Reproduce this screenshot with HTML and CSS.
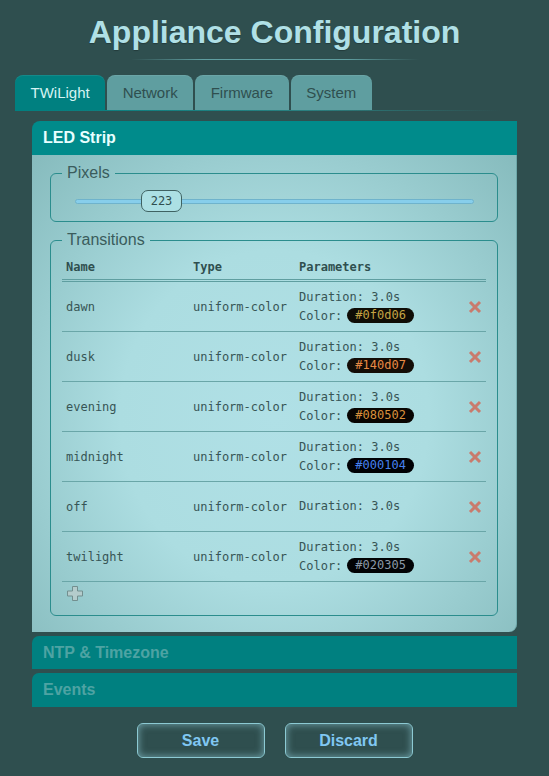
FILE: index.html
```html
<!DOCTYPE html>
<html lang="en">
<head>
<meta charset="utf-8">
<title>Appliance Configuration</title>
<link rel="stylesheet" href="styles.css">
</head>
<body>
<header class="page-head">
  <h1 class="title">Appliance Configuration</h1>
  <div class="rule"></div>
</header>

<nav class="tabs">
  <div class="tab-row">
    <div class="tab active">TWiLight</div>
    <div class="tab">Network</div>
    <div class="tab">Firmware</div>
    <div class="tab">System</div>
  </div>
  <div class="tab-line"></div>
</nav>

<main class="content">
  <section class="panel">
    <div class="panel-head">LED Strip</div>
    <div class="panel-body">
      <fieldset class="group">
        <legend class="group-title">Pixels</legend>
        <div class="slider">
          <div class="track"></div>
          <div class="thumb" style="margin-left:66px">223</div>
        </div>
      </fieldset>

      <fieldset class="group group-transitions">
        <legend class="group-title">Transitions</legend>
        <table class="grid">
          <colgroup>
            <col class="c-name"><col class="c-type"><col class="c-params"><col class="c-del">
          </colgroup>
          <thead>
            <tr><th>Name</th><th>Type</th><th>Parameters</th><th></th></tr>
          </thead>
          <tbody>
            <tr>
              <td>dawn</td><td>uniform-color</td>
              <td><div class="p">Duration: 3.0s</div><div class="p">Color:<span class="swatch" style="background:#0f0d06;color:#c4a444">#0f0d06</span></div></td>
              <td class="del"><svg class="x" viewBox="0 0 14 14" width="14" height="14"><path d="M2 2 L12 12 M12 2 L2 12"/></svg></td>
            </tr>
            <tr>
              <td>dusk</td><td>uniform-color</td>
              <td><div class="p">Duration: 3.0s</div><div class="p">Color:<span class="swatch" style="background:#140d07;color:#e88a44">#140d07</span></div></td>
              <td class="del"><svg class="x" viewBox="0 0 14 14" width="14" height="14"><path d="M2 2 L12 12 M12 2 L2 12"/></svg></td>
            </tr>
            <tr>
              <td>evening</td><td>uniform-color</td>
              <td><div class="p">Duration: 3.0s</div><div class="p">Color:<span class="swatch" style="background:#080502;color:#d8903c">#080502</span></div></td>
              <td class="del"><svg class="x" viewBox="0 0 14 14" width="14" height="14"><path d="M2 2 L12 12 M12 2 L2 12"/></svg></td>
            </tr>
            <tr>
              <td>midnight</td><td>uniform-color</td>
              <td><div class="p">Duration: 3.0s</div><div class="p">Color:<span class="swatch" style="background:#000104;color:#4680ee">#000104</span></div></td>
              <td class="del"><svg class="x" viewBox="0 0 14 14" width="14" height="14"><path d="M2 2 L12 12 M12 2 L2 12"/></svg></td>
            </tr>
            <tr>
              <td>off</td><td>uniform-color</td>
              <td><div class="p">Duration: 3.0s</div></td>
              <td class="del"><svg class="x" viewBox="0 0 14 14" width="14" height="14"><path d="M2 2 L12 12 M12 2 L2 12"/></svg></td>
            </tr>
            <tr>
              <td>twilight</td><td>uniform-color</td>
              <td><div class="p">Duration: 3.0s</div><div class="p">Color:<span class="swatch" style="background:#020305;color:#8a98a8">#020305</span></div></td>
              <td class="del"><svg class="x" viewBox="0 0 14 14" width="14" height="14"><path d="M2 2 L12 12 M12 2 L2 12"/></svg></td>
            </tr>
            <tr class="add-row">
              <td colspan="4"><svg class="plus" viewBox="0 0 16 15" width="16" height="15"><path d="M5.5 0.5 H10.5 V5 H15.5 V10 H10.5 V14.5 H5.5 V10 H0.5 V5 H5.5 Z"/></svg></td>
            </tr>
          </tbody>
        </table>
      </fieldset>
    </div>
  </section>

  <section class="panel collapsed"><div class="panel-head">NTP &amp; Timezone</div></section>
  <section class="panel collapsed"><div class="panel-head">Events</div></section>

  <div class="actions">
    <button class="btn">Save</button>
    <button class="btn">Discard</button>
  </div>
</main>
</body>
</html>
```

FILE: styles.css
```css
html, body {
  margin: 0;
  padding: 0;
}
body {
  background: #2f4f4f;
  font-family: "Liberation Sans", Arial, sans-serif;
  color: #2f4f4f;
}

.page-head {
  padding-top: 14px;
}
.title {
  margin: 0;
  font-size: 32px;
  line-height: 36px;
  font-weight: bold;
  text-align: center;
  color: #b0e0e6;
  text-shadow: 0 1px 1px rgba(0, 0, 0, 0.25);
}
.rule {
  width: 288px;
  height: 1px;
  margin: 9px auto 0;
  background: linear-gradient(90deg, rgba(95,158,160,0) 0%, #5f9ea0 25%, #5f9ea0 75%, rgba(95,158,160,0) 100%);
}

.tabs {
  margin-top: 15px;
  padding: 0 15px;
}
.tab-row {
  display: flex;
  gap: 2px;
}
.tab {
  height: 35px;
  line-height: 36px;
  padding: 0 15.5px;
  font-size: 15px;
  background: #5f9ea0;
  color: #2f4f4f;
  border-radius: 8px 8px 0 0;
  box-shadow: inset 0 1px 0 rgba(255,255,255,0.08);
}
.tab.active {
  background: #008080;
  color: #d6f3f3;
}
.tab-line {
  height: 1px;
  width: 486px;
  background: linear-gradient(90deg, #008080 0%, #2a7f7f 60%, rgba(0,128,128,0) 100%);
}

.content {
  padding: 10px 32px 0;
}

.panel-head {
  height: 34px;
  line-height: 34px;
  padding-left: 11px;
  background: #008b8b;
  color: #e8ffff;
  font-size: 16px;
  font-weight: bold;
  border-radius: 8px 0 0 0;
}
.panel-body {
  padding: 9px 19px 16px 18px;
  background: radial-gradient(ellipse farthest-corner at 50% 55%, #b0e0e6 0%, #acdde1 45%, #86bbbd 100%);
  border-radius: 0 0 8px 0;
  box-shadow: inset -1px 0 0 rgba(60,130,130,0.35);
}

.group {
  margin: 0;
  padding: 0 11px;
  border: 1px solid #2b8d8d;
  border-radius: 6px;
  min-width: 0;
}
.group-title {
  padding: 0 5px;
  font-size: 16px;
  line-height: 18px;
  color: #3a5c5c;
}
.group-transitions {
  margin-top: 9px;
  padding-bottom: 10px;
}

.slider {
  display: grid;
  margin: 8px 12px 9px 13px;
}
.track, .thumb {
  grid-area: 1 / 1;
}
.track {
  align-self: center;
  height: 5px;
  box-sizing: border-box;
  border: 1px solid #6fb3cc;
  border-radius: 3px;
  background: #87ceeb;
}
.thumb {
  justify-self: start;
  width: 41px;
  height: 22px;
  box-sizing: border-box;
  border: 1px solid #3f6262;
  border-radius: 7px;
  background: #ace0e4;
  display: flex;
  align-items: center;
  justify-content: center;
  font-family: "DejaVu Sans Mono", monospace;
  font-size: 12px;
  color: #2f4f4f;
}

.grid {
  width: 100%;
  margin-top: 5px;
  border-collapse: collapse;
  table-layout: fixed;
  font-family: "DejaVu Sans Mono", monospace;
  font-size: 12px;
  color: #375555;
}
.c-name { width: 127px; }
.c-type { width: 106px; }
.c-params { width: 168px; }
.c-del { width: 23px; }

.grid th {
  height: 25px;
  padding: 0 4px;
  text-align: left;
  font-weight: bold;
  color: #2f4f4f;
  border-bottom: 3px double #5f9ea0;
  vertical-align: middle;
}
.grid td {
  height: 49px;
  padding: 0 4px;
  border-bottom: 1px solid #6aa6a8;
  vertical-align: middle;
  white-space: nowrap;
}
.p {
  line-height: 19px;
}
.swatch {
  display: inline-block;
  margin-left: 5px;
  padding: 0 8px;
  height: 15px;
  line-height: 15px;
  border-radius: 8px;
  vertical-align: middle;
  position: relative;
  top: -1px;
}
.del {
  text-align: center;
}
.x {
  display: block;
  margin: 0 auto;
  fill: none;
  stroke: #c97b6d;
  stroke-width: 3;
}
.add-row td {
  height: 23px;
  border-bottom: none;
  padding-left: 5px;
}
.plus {
  display: block;
  fill: #b4cccc;
  stroke: #738f8f;
  stroke-width: 1;
}

.panel.collapsed {
  margin-top: 4px;
}
.panel.collapsed .panel-head {
  height: 33px;
  line-height: 33px;
  background: #008080;
  color: #4ea3a3;
  border-radius: 7px 0 0 0;
}
.panel.collapsed + .panel.collapsed .panel-head {
  height: 34px;
  line-height: 34px;
}

.actions {
  display: flex;
  justify-content: center;
  gap: 20px;
  margin: 16px -32px 0;
}
.btn {
  width: 128px;
  height: 35px;
  border: 1px solid #8ccad3;
  border-radius: 6px;
  background: #2f4f4f;
  box-shadow: inset 0 0 7px 1px rgba(150, 210, 222, 0.55);
  color: #80c7f2;
  font-family: "Liberation Sans", Arial, sans-serif;
  font-size: 16px;
  font-weight: bold;
  padding: 0;
}
```
